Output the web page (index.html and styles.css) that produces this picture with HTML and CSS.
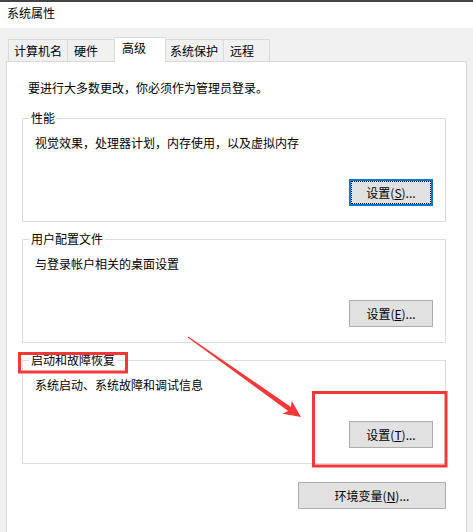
FILE: index.html
```html
<!DOCTYPE html>
<html lang="zh-CN">
<head>
<meta charset="utf-8">
<title>系统属性</title>
<link rel="stylesheet" href="styles.css">
</head>
<body>
<div class="window">
  <div class="titlebar"><span class="title">系统属性</span></div>
  <div class="client">
    <div class="tabs">
      <div class="tab t1">计算机名</div>
      <div class="tab t2">硬件</div>
      <div class="tab active">高级</div>
      <div class="tab t4">系统保护</div>
      <div class="tab t5">远程</div>
    </div>
    <div class="panel">
      <p class="intro">要进行大多数更改，你必须作为管理员登录。</p>

      <section class="group">
        <div class="group-label">性能</div>
        <p class="desc">视觉效果，处理器计划，内存使用，以及虚拟内存</p>
        <button class="btn focused">设置(<u>S</u>)...</button>
      </section>

      <section class="group">
        <div class="group-label">用户配置文件</div>
        <p class="desc">与登录帐户相关的桌面设置</p>
        <button class="btn">设置(<u>E</u>)...</button>
      </section>

      <section class="group">
        <div class="group-label">启动和故障恢复</div>
        <p class="desc">系统启动、系统故障和调试信息</p>
        <button class="btn">设置(<u>T</u>)...</button>
      </section>

      <div class="env-row">
        <button class="btn env">环境变量(<u>N</u>)...</button>
      </div>
    </div>
  </div>
  <svg class="annot" width="473" height="532" viewBox="0 0 473 532" aria-hidden="true">
    <rect x="19.5" y="353.5" width="107" height="18.5" fill="none" stroke="#f4383a" stroke-width="3"/>
    <rect x="313.5" y="392.5" width="132.5" height="73.5" fill="none" stroke="#f4383a" stroke-width="3"/>
    <polygon points="187.7,337.4 288.1,410.9 282.5,413.7 301,417 291.7,400.7 291.0,406.9 188.3,336.6" fill="#f4383a"/>
  </svg>
</div>
</body>
</html>
```

FILE: styles.css
```css
* { box-sizing: border-box; }

html, body {
  margin: 0;
  padding: 0;
}

body {
  font-family: "Noto Sans CJK SC", "Microsoft YaHei", sans-serif;
  font-size: 12px;
  line-height: 16px;
  color: #000;
  background: #f0f0f0;
}

.window {
  position: relative;
  width: 473px;
  height: 532px;
  overflow: hidden;
  background: #f0f0f0;
  display: flex;
  flex-direction: column;
}

.titlebar {
  height: 28px;
  border-top: 2px solid #444;
  background: #fff;
  padding: 3px 0 0 7px;
  flex: none;
}

.client {
  flex: 1;
  display: flex;
  flex-direction: column;
  padding: 9px 0 0 6px;
}

.tabs {
  display: flex;
  align-items: flex-end;
  padding-left: 2px;
  flex: none;
}

.tab {
  height: 22px;
  background: #f0f0f0;
  border-top: 1px solid #d9d9d9;
  padding-top: 3px;
  padding-left: 6px;
  white-space: nowrap;
}

.t1 { width: 59px; border-left: 1px solid #d9d9d9; padding-left: 5px; }
.t2 { width: 47px; border-left: 1px solid #d9d9d9; }
.t4 { width: 58px; border-right: 1px solid #d9d9d9; padding-left: 4px; }
.t5 { width: 46px; border-right: 1px solid #d9d9d9; }

.tab.active {
  position: relative;
  z-index: 1;
  width: 52px;
  height: 25px;
  margin-bottom: -1px;
  background: #fff;
  border-left: 1px solid #d9d9d9;
  border-right: 1px solid #d9d9d9;
  padding-top: 2px;
  padding-left: 7px;
}

.panel {
  flex: 1;
  width: 461px;
  background: #fff;
  border: 1px solid #d9d9d9;
  border-bottom: 0;
  padding-top: 18px;
}

.intro {
  margin: 0 0 0 21px;
}

.group {
  height: 104px;
  width: 424px;
  margin: 22px 0 0 15px;
  border: 1px solid #dcdcdc;
  padding: 0 12px 15px 6px;
  display: flex;
  flex-direction: column;
}

.group + .group {
  margin-top: 17px;
}

.group-label {
  align-self: flex-start;
  margin-top: -9px;
  padding: 0 2px;
  background: #fff;
}

.desc {
  margin: 9px 0 0 6px;
}

.btn {
  font-family: inherit;
  font-size: 12px;
  line-height: 16px;
  color: #000;
  background: #e1e1e1;
  border: 1px solid #adadad;
  border-radius: 0;
  padding: 1px 0 0 0;
  width: 84px;
  height: 27px;
  margin: auto 0 0 0;
  align-self: flex-end;
}

.btn u {
  text-decoration: underline;
  text-underline-offset: 1px;
}

.btn.focused {
  border: 2px solid #0078d7;
  outline: 1px dotted #000;
  outline-offset: -3px;
}

.env-row {
  width: 424px;
  margin: 18px 0 0 15px;
  display: flex;
  justify-content: flex-end;
}

.btn.env {
  width: 148px;
  margin: 0;
}

.annot {
  position: absolute;
  left: 0;
  top: 0;
  pointer-events: none;
}
```
